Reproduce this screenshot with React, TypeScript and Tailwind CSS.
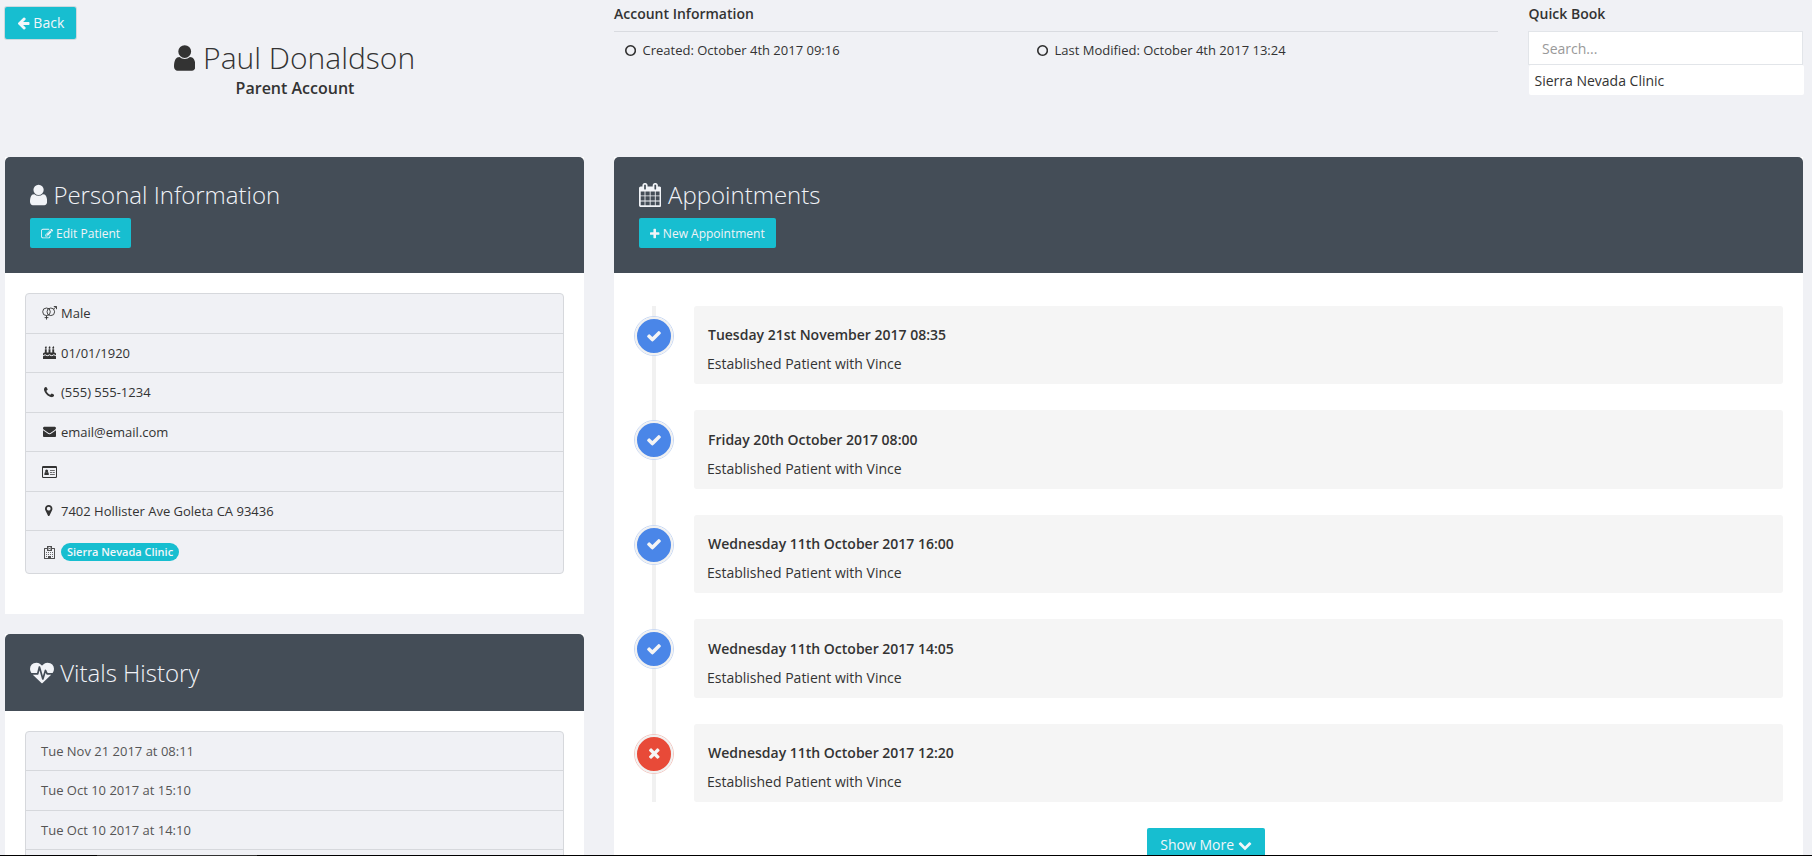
import type { ReactNode } from "react";

type IconProps = { className?: string; box: string; d: string };

function Glyph({ className = "", box, d }: IconProps) {
  return (
    <svg viewBox={box} fill="currentColor" className={"inline-block h-[1em] w-auto shrink-0 align-[-0.143em] " + className}>
      <path d={d} />
    </svg>
  );
}

const flame = "q0 77-36 118.5t-92 41.5q-53 0-90.5-37.5t-37.5-90.5q0-29 9.5-51t23.5-34 31-28 31-31.5 23.5-44.5 9.5-67q38 0 83 74t45 150z";

const icons = {
  user: {
    box: "256 0 1280 1792",
    d: "M1536 1399q0 109-62.5 187t-150.5 78h-854q-88 0-150.5-78t-62.5-187q0-85 8.5-160.5t31.5-152 58.5-131 94-89 134.5-34.5q131 128 313 128t313-128q76 0 134.5 34.5t94 89 58.5 131 31.5 152 8.5 160.5zm-256-887q0 159-112.5 271.5t-271.5 112.5-271.5-112.5-112.5-271.5 112.5-271.5 271.5-112.5 271.5 112.5 112.5 271.5z",
  },
  arrowLeft: {
    box: "64 0 1664 1792",
    d: "M1664 896v128q0 53-32.5 90.5t-84.5 37.5h-704l293 294q38 36 38 90t-38 90l-75 76q-37 37-90 37-52 0-91-37l-651-652q-37-37-37-90 0-52 37-91l651-650q38-38 91-38 52 0 90 38l75 74q38 38 38 91t-38 91l-293 293h704q52 0 84.5 37.5t32.5 90.5z",
  },
  edit: {
    box: "0 0 1792 1792",
    d: "M888 1184l116-116-152-152-116 116v56h96v96h56zm440-720q-16-16-33 1l-350 350q-17 17-1 33t33-1l350-350q17-17 1-33zm80 594v190q0 119-84.5 203.5t-203.5 84.5h-832q-119 0-203.5-84.5t-84.5-203.5v-832q0-119 84.5-203.5t203.5-84.5h832q63 0 117 25 15 7 18 23 3 17-9 29l-49 49q-14 14-32 8-23-6-45-6h-832q-66 0-113 47t-47 113v832q0 66 47 113t113 47h832q66 0 113-47t47-113v-126q0-13 9-22l64-64q15-15 35-7t20 29zm-96-738l288 288-672 672h-288v-288zm444 132l-92 92-288-288 92-92q28-28 68-28t68 28l152 152q28 28 28 68t-28 68z",
  },
  calendar: {
    box: "64 0 1664 1792",
    d: "M192 1664h288v-288h-288v288zm352 0h320v-288h-320v288zm-352-352h288v-320h-288v320zm352 0h320v-320h-320v320zm-352-384h288v-288h-288v288zm736 736h320v-288h-320v288zm-384-736h320v-288h-320v288zm768 736h288v-288h-288v288zm-384-352h320v-320h-320v320zm-352-864v-288q0-13-9.5-22.5t-22.5-9.5h-64q-13 0-22.5 9.5t-9.5 22.5v288q0 13 9.5 22.5t22.5 9.5h64q13 0 22.5-9.5t9.5-22.5zm736 864h288v-320h-288v320zm-384-384h320v-288h-320v288zm384 0h288v-288h-288v288zm32-480v-288q0-13-9.5-22.5t-22.5-9.5h-64q-13 0-22.5 9.5t-9.5 22.5v288q0 13 9.5 22.5t22.5 9.5h64q13 0 22.5-9.5t9.5-22.5zm384-64v1280q0 52-38 90t-90 38h-1408q-52 0-90-38t-38-90v-1280q0-52 38-90t90-38h128v-96q0-66 47-113t113-47h64q66 0 113 47t47 113v96h384v-96q0-66 47-113t113-47h64q66 0 113 47t47 113v96h128q52 0 90 38t38 90z",
  },
  plus: {
    box: "192 0 1408 1792",
    d: "M1600 736v192q0 40-28 68t-68 28h-416v416q0 40-28 68t-68 28h-192q-40 0-68-28t-28-68v-416h-416q-40 0-68-28t-28-68v-192q0-40 28-68t68-28h416v-416q0-40 28-68t68-28h192q40 0 68 28t28 68v416h416q40 0 68 28t28 68z",
  },
  check: {
    box: "0 0 1792 1792",
    d: "M1671 566q0 40-28 68l-724 724-136 136q-28 28-68 28t-68-28l-136-136-362-362q-28-28-28-68t28-68l136-136q28-28 68-28t68 28l294 295 656-657q28-28 68-28t68 28l136 136q28 28 28 68z",
  },
  times: {
    box: "192 0 1408 1792",
    d: "M1490 1322q0 40-28 68l-136 136q-28 28-68 28t-68-28l-294-294-294 294q-28 28-68 28t-68-28l-136-136q-28-28-28-68t28-68l294-294-294-294q-28-28-28-68t28-68l136-136q28-28 68-28t68 28l294 294 294-294q28-28 68-28t68 28l136 136q28 28 28 68t-28 68l-294 294 294 294q28 28 28 68z",
  },
  chevronDown: {
    box: "0 0 1792 1792",
    d: "M1683 808l-742 741q-19 19-45 19t-45-19l-742-741q-19-19-19-45.5t19-45.5l166-165q19-19 45-19t45 19l531 531 531-531q19-19 45-19t45 19l166 165q19 19 19 45.5t-19 45.5z",
  },
  circle: {
    box: "128 0 1536 1792",
    d: "M896 352q-148 0-273 73t-198 198-73 273 73 273 198 198 273 73 273-73 198-198 73-273-73-273-198-198-273-73zm768 544q0 209-103 385.5t-279.5 279.5-385.5 103-385.5-103-279.5-279.5-103-385.5 103-385.5 279.5-279.5 385.5-103 385.5 103 279.5 279.5 103 385.5z",
  },
  phone: {
    box: "192 0 1408 1792",
    d: "M1600 1240q0 27-10 70.5t-21 68.5q-21 50-122 106-94 51-186 51-27 0-53-3.5t-57.5-12.5-47-14.5-55.5-20.5-49-18q-98-35-175-83-127-79-264-216t-216-264q-48-77-83-175-3-9-18-49t-20.5-55.5-14.5-47-12.5-57.5-3.5-53q0-92 51-186 56-101 106-122 25-11 68.5-21t70.5-10q14 0 21 3 18 6 53 76 11 19 30 54t35 63.5 31 53.5q3 4 17.5 25t21.5 35.5 7 28.5q0 20-28.5 50t-62 55-62 53-28.5 46q0 9 5 22.5t8.5 20.5 14 24 11.5 19q76 137 174 235t235 174q2 1 19 11.5t24 14 20.5 8.5 22.5 5q18 0 46-28.5t53-62 55-62 50-28.5q14 0 28.5 7t35.5 21.5 25 17.5q25 15 53.5 31t63.5 35 54 30q70 35 76 53 3 7 3 21z",
  },
  envelope: {
    box: "0 0 1792 1792",
    d: "M1792 710v794q0 66-47 113t-113 47h-1472q-66 0-113-47t-47-113v-794q44 49 101 87 362 246 497 345 57 42 92.5 65.5t94.5 48 110 24.5h2q51 0 110-24.5t94.5-48 92.5-65.5q170-123 498-345 57-39 100-87zm0-294q0 79-49 151t-122 123q-376 261-468 325-10 7-42.5 31t-54 38.5-52 32.5-57.5 27-50 9h-2q-23 0-50-9t-57.5-27-52-32.5-54-38.5-42.5-31q-91-64-262-182.5t-205-142.5q-62-42-117-115.5t-55-136.5q0-78 41.5-130t118.5-52h1472q65 0 112.5 47t47.5 113z",
  },
  marker: {
    box: "384 0 1024 1792",
    d: "M1152 640q0-106-75-181t-181-75-181 75-75 181 75 181 181 75 181-75 75-181zm256 0q0 109-33 179l-364 774q-16 33-47.5 52t-67.5 19-67.5-19-46.5-52l-365-774q-33-70-33-179 0-212 150-362t362-150 362 150 150 362z",
  },
  heartbeat: {
    box: "0 0 1792 1792",
    d: "M1280 1024h305q-5 6-10 10.5t-9 7.5l-3 4-623 600q-18 18-44 18t-44-18l-624-602q-5-2-21-20h369q22 0 39.5-13.5t22.5-34.5l70-281 190 667q6 20 23 33t39 13q21 0 38-13t23-33l146-485 56 112q18 35 57 35zm512-428q0 145-103 300h-369l-111-221q-8-17-25.5-27t-36.5-8q-45 5-56 46l-129 430-196-686q-6-20-23.5-33t-39.5-13-39 13.5-22 34.5l-116 464h-423q-103-155-103-300 0-220 127-344t351-124q62 0 126.5 21.5t120 58 95.5 68.5 76 68q36-36 76-68t95.5-68.5 120-58 126.5-21.5q224 0 351 124t127 344z",
  },
  cake: {
    box: "0 0 1792 1792",
    d:
      "M1792 1408v384h-1792v-384q45 0 85-14t59-27.5 47-37.5q30-27 51.5-38t56.5-11q24 0 44 7t31 15 33 27q29 25 47 38t58 27 86 14q45 0 85-14.5t58-27 48-37.5q21-19 32.5-27t31-15 43.5-7q35 0 56.5 11t51.5 38q28 24 47 37.5t59 27.5 85 14 85-14 59-27.5 47-37.5q30-27 51.5-38t56.5-11q34 0 55.5 11t51.5 38q28 24 47 37.5t59 27.5 85 14zm0-320v192q-24 0-44-7t-31-15-33-27q-29-25-47-38t-58-27-85-14q-46 0-86 14t-58 27-47 38q-22 19-33 27t-31 15-44 7q-35 0-56.5-11t-51.5-38q-29-25-47-38t-58-27-86-14q-45 0-85 14.5t-58 27-48 37.5q-21 19-32.5 27t-31 15-43.5 7q-35 0-56.5-11t-51.5-38q-28-24-47-37.5t-59-27.5-85-14q-46 0-86 14t-58 27-47 38q-30 27-51.5 38t-56.5 11v-192q0-80 56-136t136-56h64v-448h256v448h256v-448h256v448h256v-448h256v448h64q80 0 136 56t56 136z" +
      "M512 224" + flame + "M1024 224" + flame + "M1536 224" + flame,
  },
};

function VenusMars() {
  return (
    <svg viewBox="0 0 15 14" fill="none" stroke="currentColor" className="inline-block h-[14px] w-[15px] shrink-0">
      <circle cx="4.5" cy="5.8" r="3.8" strokeWidth="0.9" />
      <circle cx="8.8" cy="5.8" r="3.8" strokeWidth="0.9" />
      <path strokeWidth="0.9" d="M4.5 9.6V13.6M2.6 11.6H6.4M11.5 3.1L14.3 0.6M11.8 0.5H14.5V3.2" />
    </svg>
  );
}

function IdCard() {
  return (
    <svg viewBox="0 0 15 12" fill="currentColor" className="mt-[2px] inline-block h-[12px] w-[15px] shrink-0">
      <path
        fillRule="evenodd"
        d="M1.2 0H13.8A1.2 1.2 0 0 1 15 1.2V10.8A1.2 1.2 0 0 1 13.8 12H1.2A1.2 1.2 0 0 1 0 10.8V1.2A1.2 1.2 0 0 1 1.2 0ZM1 2V10.6Q1 11 1.4 11H13.6Q14 11 14 10.6V2Z"
      />
      <circle cx="4.6" cy="4.9" r="1.5" />
      <path d="M2.4 9V7.8Q2.4 6.3 3.6 6.1Q4.6 6.9 5.6 6.1Q6.8 6.3 6.8 7.8V9Z" />
      <path fillOpacity="0.7" d="M8 4H12.8V4.9H8ZM8 6H10V6.9H8ZM10.6 6H12.8V6.9H10.6ZM8 8H12.8V8.9H8Z" />
    </svg>
  );
}

function Hospital() {
  return (
    <svg viewBox="0 0 11 13" fill="currentColor" className="inline-block h-[13px] w-[11px] shrink-0">
      <path
        fillRule="evenodd"
        fillOpacity="0.85"
        d="M3 0H8V2H10.5Q11 2 11 2.5V12.5Q11 13 10.5 13H.5Q0 13 0 12.5V2.5Q0 2 .5 2H3ZM4 1V4H7V1ZM1 3V12H4V10H7V12H10V3H8V5H3V3Z"
      />
      <path
        fillOpacity="0.7"
        d="M4.3 1.3H5V2.1H6V1.3H6.7V3.7H6V2.9H5V3.7H4.3ZM2 6H3V7H2ZM4 6H5V7H4ZM6 6H7V7H6ZM8 6H9V7H8ZM2 8H3V9H2ZM4 8H5V9H4ZM6 8H7V9H6ZM8 8H9V9H8ZM2 10H3V11H2ZM8 10H9V11H8Z"
      />
    </svg>
  );
}

function PanelHead({ children, className }: { children: ReactNode; className: string }) {
  return <div className={"rounded-t-[5px] bg-[#444d57] text-[#f1f3f7] " + className}>{children}</div>;
}

function InfoRow({ icon, children }: { icon: ReactNode; children?: ReactNode }) {
  return (
    <li className="flex h-[39.5px] items-center border-b border-[#d6d8dc] pl-[13px] last:h-[42px] last:border-b-0">
      <span className="mr-[2px] flex w-[20px] justify-center">{icon}</span>
      {children}
    </li>
  );
}

const appointments = [
  { when: "Tuesday 21st November 2017 08:35", done: true },
  { when: "Friday 20th October 2017 08:00", done: true },
  { when: "Wednesday 11th October 2017 16:00", done: true },
  { when: "Wednesday 11th October 2017 14:05", done: true },
  { when: "Wednesday 11th October 2017 12:20", done: false },
];

const vitals = ["Tue Nov 21 2017 at 08:11", "Tue Oct 10 2017 at 15:10", "Tue Oct 10 2017 at 14:10", ""];

export default function App() {
  return (
    <div className="flex h-[856px] w-[1812px] flex-col overflow-hidden bg-[#f0f1f5] font-['Open_Sans',sans-serif] text-[14px] leading-[20px] text-[#333]">
      <div className="h-[855px] overflow-hidden">
        <header className="flex h-[157px] pl-[5px]">
          <div className="w-[579px] pt-[7px]">
            <button className="block h-[32px] w-[71px] rounded-[2px] bg-[#17bed0] text-center text-[#f3f6fa] ring-1 ring-[#cdd9de]">
              <Glyph {...icons.arrowLeft} /> Back
            </button>
            <h1 className="text-center text-[30px] leading-[38px] font-light">
              <Glyph {...icons.user} /> Paul Donaldson
            </h1>
            <p className="pl-px text-center text-[16px] leading-[22px] font-semibold">Parent Account</p>
          </div>
          <section className="ml-[30px] w-[884px]">
            <h2 className="h-[32px] border-b border-[#d9dbe0] pt-[4px] font-semibold">Account Information</h2>
            <div className="flex pt-[8px] pl-[11px] text-[13px]">
              <span className="w-[412px]">
                <Glyph {...icons.circle} className="mr-[3px]" /> Created: October 4th 2017 09:16
              </span>
              <span>
                <Glyph {...icons.circle} className="mr-[3px]" /> Last Modified: October 4th 2017 13:24
              </span>
            </div>
          </section>
          <section className="ml-[30px] w-[276px]">
            <h2 className="h-[31px] pt-[4px] pl-[0.5px] font-semibold">Quick Book</h2>
            <input
              placeholder="Search..."
              className="block h-[34px] w-[275px] border border-[#e2e5e9] bg-white px-[13px] placeholder:text-[#999]"
            />
            <div className="ml-px h-[30px] w-[275px] rounded-[2px] bg-white pt-[6px] pl-[5.5px]">Sierra Nevada Clinic</div>
          </section>
        </header>

        <div className="flex items-start pl-[5px]">
          <div className="w-[579px]">
            <section className="h-[457px] bg-white">
              <PanelHead className="h-[116px] px-[25px] pt-[23px]">
                <h2 className="text-[24px] leading-[30px] font-light">
                  <Glyph {...icons.user} /> Personal Information
                </h2>
                <button className="mt-[8px] block h-[30px] w-[101px] rounded-[2px] bg-[#17bed0] pt-px text-center text-[12px] leading-[30px]">
                  <Glyph {...icons.edit} /> Edit Patient
                </button>
              </PanelHead>
              <ul className="mx-[20px] mt-[20px] rounded-[4px] border border-[#d6d8dc] bg-[#f0f1f5] text-[13px]">
                <InfoRow icon={<VenusMars />}>Male</InfoRow>
                <InfoRow icon={<Glyph {...icons.cake} />}>01/01/1920</InfoRow>
                <InfoRow icon={<Glyph {...icons.phone} />}>(555) 555-1234</InfoRow>
                <InfoRow icon={<Glyph {...icons.envelope} />}>email@email.com</InfoRow>
                <InfoRow icon={<IdCard />} />
                <InfoRow icon={<Glyph {...icons.marker} />}>7402 Hollister Ave Goleta CA 93436</InfoRow>
                <InfoRow icon={<Hospital />}>
                  <span className="h-[18px] rounded-full bg-[#17bed0] px-[6px] text-[11px] leading-[18px] font-semibold text-[#f3f6fa]">
                    Sierra Nevada Clinic
                  </span>
                </InfoRow>
              </ul>
            </section>
            <section className="mt-[20px] bg-white">
              <PanelHead className="h-[77px] px-[25px] pt-[24px]">
                <h2 className="text-[24px] leading-[30px] font-light">
                  <Glyph {...icons.heartbeat} /> Vitals History
                </h2>
              </PanelHead>
              <div className="px-[20px] pt-[20px]">
                <ul className="rounded-[4px] border border-[#d6d8dc] bg-[#f0f1f5] text-[13px] text-[#555]">
                  {vitals.map((v, i) => (
                    <li key={i} className="flex h-[39.3px] items-center border-b border-[#d6d8dc] pl-[15px]">
                      {v}
                    </li>
                  ))}
                </ul>
              </div>
            </section>
          </div>

          <section className="ml-[30px] h-[720px] w-[1189px] bg-white">
            <PanelHead className="h-[116px] px-[25px] pt-[23px]">
              <h2 className="text-[24px] leading-[30px] font-light">
                <Glyph {...icons.calendar} className="mr-[0.5px]" /> Appointments
              </h2>
              <button className="mt-[8px] block h-[30px] w-[137px] rounded-[2px] bg-[#17bed0] pt-px text-center text-[12px] leading-[30px]">
                <Glyph {...icons.plus} /> New Appointment
              </button>
            </PanelHead>
            <ol className="relative mt-[33px] flex flex-col gap-[26.4px] pr-[20px] pl-[20px]">
              <span className="absolute top-0 bottom-0 left-[38px] w-[4px] bg-[#f1f1f1]" />
              {appointments.map((a) => (
                <li key={a.when} className="relative flex h-[78.1px]">
                  <span
                    className={
                      "mt-[10px] flex size-[40px] items-center justify-center rounded-full border " +
                      (a.done ? "border-[#c9d9f5]" : "border-[#f3c8c2]")
                    }
                  >
                    <span
                      className={
                        "flex size-[38px] items-center justify-center rounded-full border-2 border-[#f1f1f1] pb-px text-[16px] text-[#f5f5f5] " +
                        (a.done ? "bg-[#4a86e8]" : "bg-[#e84a38]")
                      }
                    >
                      <Glyph {...(a.done ? icons.check : icons.times)} />
                    </span>
                  </span>
                  <div className="ml-[20px] flex-1 rounded-[3px] bg-[#f5f5f5] pt-[19.2px] pl-[13px]">
                    <h3 className="pl-px font-semibold">{a.when}</h3>
                    <p className="mt-[9px]">Established Patient with Vince</p>
                  </div>
                </li>
              ))}
            </ol>
            <button className="mt-[26px] ml-[533px] block h-[34px] w-[118px] rounded-[2px] bg-[#17bed0] text-center text-[#f3f6fa]">
              Show More <Glyph {...icons.chevronDown} />
            </button>
          </section>
        </div>
      </div>
      <div className="h-px bg-black pl-[97px]">
        <div className="h-px w-[160px] bg-[#333]" />
      </div>
    </div>
  );
}
